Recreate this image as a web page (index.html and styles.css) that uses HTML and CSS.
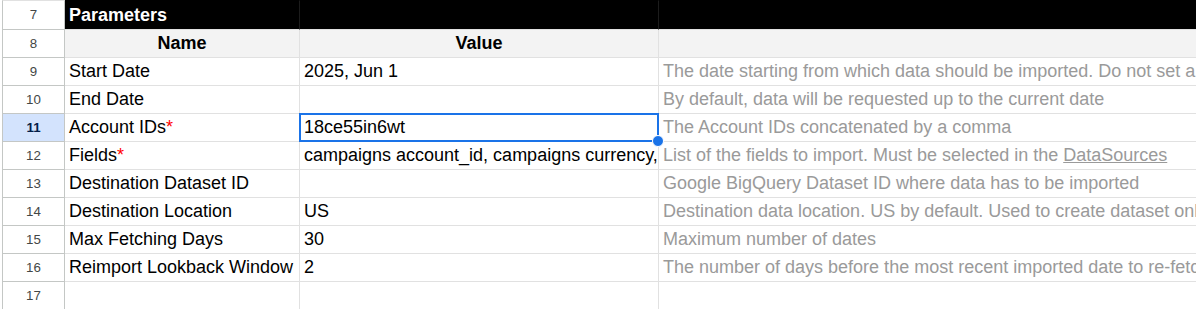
FILE: index.html
```html
<!DOCTYPE html>
<html lang="en">

<head>
    <meta charset="utf-8">
    <meta name="viewport" content="width=device-width, initial-scale=1.0">
    <title>Parameters</title>
    <link rel="stylesheet" href="styles.css">
</head>

<body>
    <div class="sheet">
        <div class="row title">
            <div class="cell num">7</div>
            <div class="cell">Parameters</div>
            <div class="cell"></div>
            <div class="cell"></div>
        </div>
        <div class="row head">
            <div class="cell num">8</div>
            <div class="cell">Name</div>
            <div class="cell">Value</div>
            <div class="cell"></div>
        </div>
        <div class="row">
            <div class="cell num">9</div>
            <div class="cell">Start Date</div>
            <div class="cell">2025, Jun 1</div>
            <div class="cell note">The date starting from which data should be imported. Do not set a date too far in the past</div>
        </div>
        <div class="row">
            <div class="cell num">10</div>
            <div class="cell">End Date</div>
            <div class="cell"></div>
            <div class="cell note">By default, data will be requested up to the current date</div>
        </div>
        <div class="row current">
            <div class="cell num">11</div>
            <div class="cell">Account IDs<span class="req">*</span></div>
            <div class="cell active">18ce55in6wt<span class="handle"></span></div>
            <div class="cell note">The Account IDs concatenated by a comma</div>
        </div>
        <div class="row">
            <div class="cell num">12</div>
            <div class="cell">Fields<span class="req">*</span></div>
            <div class="cell">campaigns account_id, campaigns currency, campaigns name</div>
            <div class="cell note">List of the fields to import. Must be selected in the <u>DataSources</u></div>
        </div>
        <div class="row">
            <div class="cell num">13</div>
            <div class="cell">Destination Dataset ID</div>
            <div class="cell"></div>
            <div class="cell note">Google BigQuery Dataset ID where data has to be imported</div>
        </div>
        <div class="row">
            <div class="cell num">14</div>
            <div class="cell">Destination Location</div>
            <div class="cell">US</div>
            <div class="cell note">Destination data location. US by default. Used to create dataset only</div>
        </div>
        <div class="row">
            <div class="cell num">15</div>
            <div class="cell">Max Fetching Days</div>
            <div class="cell">30</div>
            <div class="cell note">Maximum number of dates</div>
        </div>
        <div class="row">
            <div class="cell num">16</div>
            <div class="cell">Reimport Lookback Window</div>
            <div class="cell">2</div>
            <div class="cell note">The number of days before the most recent imported date to re-fetch data</div>
        </div>
        <div class="row">
            <div class="cell num">17</div>
            <div class="cell"></div>
            <div class="cell"></div>
            <div class="cell"></div>
        </div>
    </div>
</body>

</html>
```

FILE: styles.css
```css
body {
    margin: 0;
    overflow: hidden;
    background-color: #fff;
    font-family: "Liberation Sans", Arial, sans-serif;
    font-size: 18px;
    color: #000;
}

.sheet {
    margin-left: 2px;
}

.row {
    display: grid;
    grid-template-columns: 63px 235px 359px 760px;
    height: 28px;
}

.cell {
    padding: 0 4px;
    line-height: 27px;
    white-space: nowrap;
    overflow: hidden;
    border-right: 1px solid #e1e1e1;
    border-bottom: 1px solid #e1e1e1;
}

/* row numbers on the left */
.num {
    text-align: center;
    padding: 0;
    font-size: 13.3px;
    color: #444746;
    border-left: 1px solid #c4c7c5;
    border-right-color: #c4c7c5;
    border-bottom-color: #c4c7c5;
}

.title {
    height: 30px;
}

.title .cell {
    border-top: 1px solid #e1e1e1;
    line-height: 28px;
}

.title .cell:not(.num) {
    background-color: #000;
    color: #fff;
    font-weight: bold;
    border-top-color: #000;
    border-right-color: #1c1c1c;
}

.head .cell:not(.num) {
    background-color: #f3f3f3;
    text-align: center;
    font-weight: bold;
}

.note {
    color: #9a9a9a;
}

.req {
    color: #f00;
}

.current .num {
    background-color: #d3e3fd;
    color: #041e49;
    font-weight: bold;
}

/* selected cell */
.active {
    position: relative;
    overflow: visible;
}

.active::after {
    content: "";
    position: absolute;
    top: -1px;
    left: -1px;
    right: -1px;
    bottom: -1px;
    border: 2px solid #1a73e8;
}

.handle {
    position: absolute;
    right: -6px;
    bottom: -6px;
    width: 10px;
    height: 10px;
    border-radius: 50%;
    background-color: #1a73e8;
    border: 1px solid #fff;
    z-index: 1;
}
```
